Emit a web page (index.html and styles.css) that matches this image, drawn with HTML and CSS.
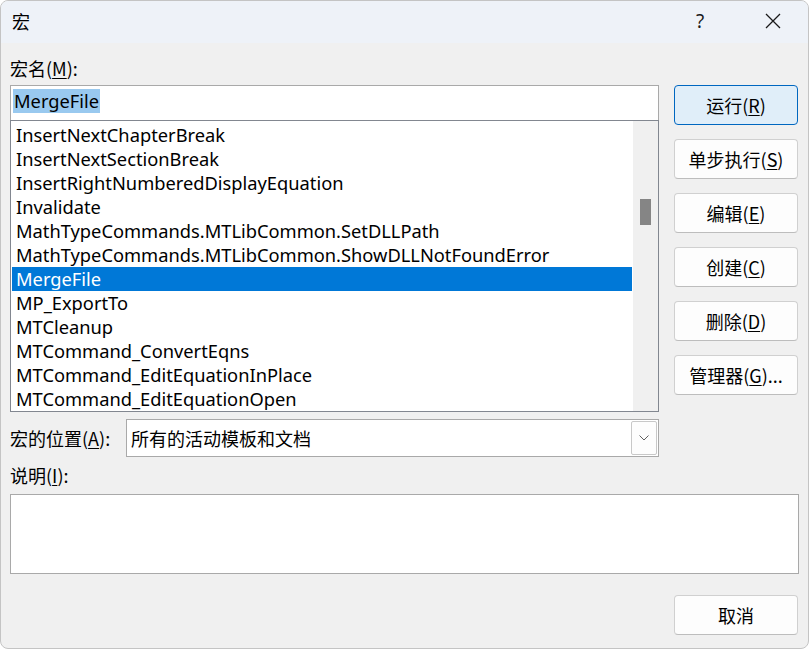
FILE: index.html
```html
<!DOCTYPE html>
<html lang="zh-CN">
  <head>
    <meta charset="UTF-8" />
    <meta name="viewport" content="width=device-width, initial-scale=1.0" />
    <title>宏</title>
    <link rel="stylesheet" href="styles.css">
  </head>
  <body>
    <div class="window">
      <!-- Title bar -->
      <header class="titlebar">
        <span class="title">宏</span>
        <span class="help">?</span>
        <span class="close">
          <svg width="16" height="16" viewBox="0 0 16 16">
            <path d="M1 1 L15 15 M15 1 L1 15" stroke="#1a1a1a" stroke-width="1.3" fill="none" />
          </svg>
        </span>
      </header>

      <div class="content">
        <div class="main">
          <div class="left-col">
            <div class="label name-label">宏名(<u>M</u>):</div>
            <div class="name-input"><span class="sel-text">MergeFile</span></div>
            <div class="listbox">
              <ul class="items">
                <li>InsertNextChapterBreak</li>
                <li>InsertNextSectionBreak</li>
                <li>InsertRightNumberedDisplayEquation</li>
                <li>Invalidate</li>
                <li>MathTypeCommands.MTLibCommon.SetDLLPath</li>
                <li>MathTypeCommands.MTLibCommon.ShowDLLNotFoundError</li>
                <li class="selected">MergeFile</li>
                <li>MP_ExportTo</li>
                <li>MTCleanup</li>
                <li>MTCommand_ConvertEqns</li>
                <li>MTCommand_EditEquationInPlace</li>
                <li>MTCommand_EditEquationOpen</li>
              </ul>
              <div class="scrollbar"><div class="thumb"></div></div>
            </div>
          </div>

          <div class="buttons">
            <button class="btn default">运行(<u>R</u>)</button>
            <button class="btn">单步执行(<u>S</u>)</button>
            <button class="btn">编辑(<u>E</u>)</button>
            <button class="btn">创建(<u>C</u>)</button>
            <button class="btn">删除(<u>D</u>)</button>
            <button class="btn">管理器(<u>G</u>)...</button>
          </div>
        </div>

        <div class="location-row">
          <span class="label">宏的位置(<u>A</u>):</span>
          <div class="combo">
            <span class="combo-text">所有的活动模板和文档</span>
            <span class="combo-btn">
              <svg width="10" height="6" viewBox="0 0 10 6">
                <path d="M0.5 0.5 L5 5 L9.5 0.5" stroke="#606060" stroke-width="1" fill="none" />
              </svg>
            </span>
          </div>
        </div>

        <div class="label desc-label">说明(<u>I</u>):</div>
        <div class="desc-box"></div>

        <div class="footer">
          <button class="btn">取消</button>
        </div>
      </div>
    </div>
  </body>
</html>
```

FILE: styles.css
```css
/* General Styling */
html {
  background: #ffffff;
}

body {
  margin: 0;
  font-family: "Noto Sans", "Noto Sans CJK SC", sans-serif;
  font-size: 18px;
  color: #000;
}

.window {
  width: 809px;
  height: 649px;
  box-sizing: border-box;
  background: #f0f0f0;
  border: 1px solid #c4c4c4;
  border-radius: 8px;
  overflow: hidden;
}

u {
  text-decoration-thickness: 1px;
  text-underline-offset: 2px;
}

/* Title bar */
.titlebar {
  height: 42px;
  background: #eef2f8;
  display: flex;
  align-items: center;
  padding: 0 0 0 11px;
}

.title {
  font-family: "Noto Sans CJK SC", sans-serif;
  font-size: 18px;
  flex: 1;
  margin-top: -2px;
}

.help {
  width: 20px;
  font-size: 19px;
  color: #1a1a1a;
  margin-right: 49px;
  margin-top: -2px;
}

.close {
  width: 16px;
  height: 16px;
  margin-right: 27px;
  margin-top: -2px;
}

.close svg {
  display: block;
}

/* Content */
.content {
  padding: 0 0 0 9px;
}

.label {
  font-family: "Noto Sans CJK SC", sans-serif;
  font-size: 18px;
  line-height: 24px;
}

.main {
  display: flex;
  gap: 15px;
}

.left-col {
  width: 649px;
}

.name-label {
  height: 42px;
  padding-top: 13px;
  box-sizing: border-box;
}

.name-input {
  height: 35px;
  box-sizing: border-box;
  background: #fff;
  border: 1px solid #a9a9a9;
  border-bottom: none;
  padding: 2px 0 0 2px;
  font-size: 18.3px;
}

.sel-text {
  display: inline-block;
  background: #99c9ef;
  height: 24px;
  line-height: 24px;
  padding: 0 1px;
}

.listbox {
  height: 292px;
  box-sizing: border-box;
  border: 1px solid #828790;
  background: #fff;
  display: flex;
  font-size: 18.3px;
}

.items {
  list-style: none;
  margin: 0;
  padding: 2px 1px 0 1px;
  flex: 1;
}

.items li {
  height: 24px;
  line-height: 24px;
  padding-left: 4px;
  white-space: nowrap;
}

.items li.selected {
  background: #0078d7;
  color: #fff;
}

.scrollbar {
  width: 25px;
  background: #f0f0f0;
  position: relative;
}

.thumb {
  position: absolute;
  left: 7px;
  top: 78px;
  width: 11px;
  height: 26px;
  background: #858585;
}

/* Buttons */
.buttons {
  display: flex;
  flex-direction: column;
  gap: 14px;
  padding-top: 42px;
}

.btn {
  width: 124px;
  height: 40px;
  box-sizing: border-box;
  background: #fdfdfd;
  border: 1px solid #d0d0d0;
  border-bottom-color: #bdbdbd;
  border-radius: 4px;
  font-family: "Noto Sans CJK SC", sans-serif;
  font-size: 18px;
  color: #000;
  padding: 0;
}

.btn.default {
  background: #e0eef9;
  border: 1px solid #0067c0;
}

/* Location row */
.location-row {
  display: flex;
  align-items: center;
  margin-top: 7px;
  height: 38px;
}

.location-row .label {
  width: 116px;
}

.combo {
  width: 533px;
  height: 38px;
  box-sizing: border-box;
  background: #fff;
  border: 1px solid #a9a9a9;
  display: flex;
  align-items: center;
  padding: 1px 1px 1px 4px;
}

.combo-text {
  flex: 1;
  font-family: "Noto Sans CJK SC", sans-serif;
}

.combo-btn {
  width: 26px;
  height: 34px;
  box-sizing: border-box;
  border: 1px solid #c8c8c8;
  border-radius: 2px;
  background: #fdfdfd;
  display: flex;
  align-items: center;
  justify-content: center;
}

.desc-label {
  margin-top: 4px;
  height: 33px;
  padding-top: 2px;
  box-sizing: border-box;
}

.desc-box {
  width: 789px;
  height: 80px;
  box-sizing: border-box;
  background: #fff;
  border: 1px solid #a9a9a9;
}

.footer {
  display: flex;
  justify-content: flex-end;
  padding: 21px 10px 0 0;
}
```
